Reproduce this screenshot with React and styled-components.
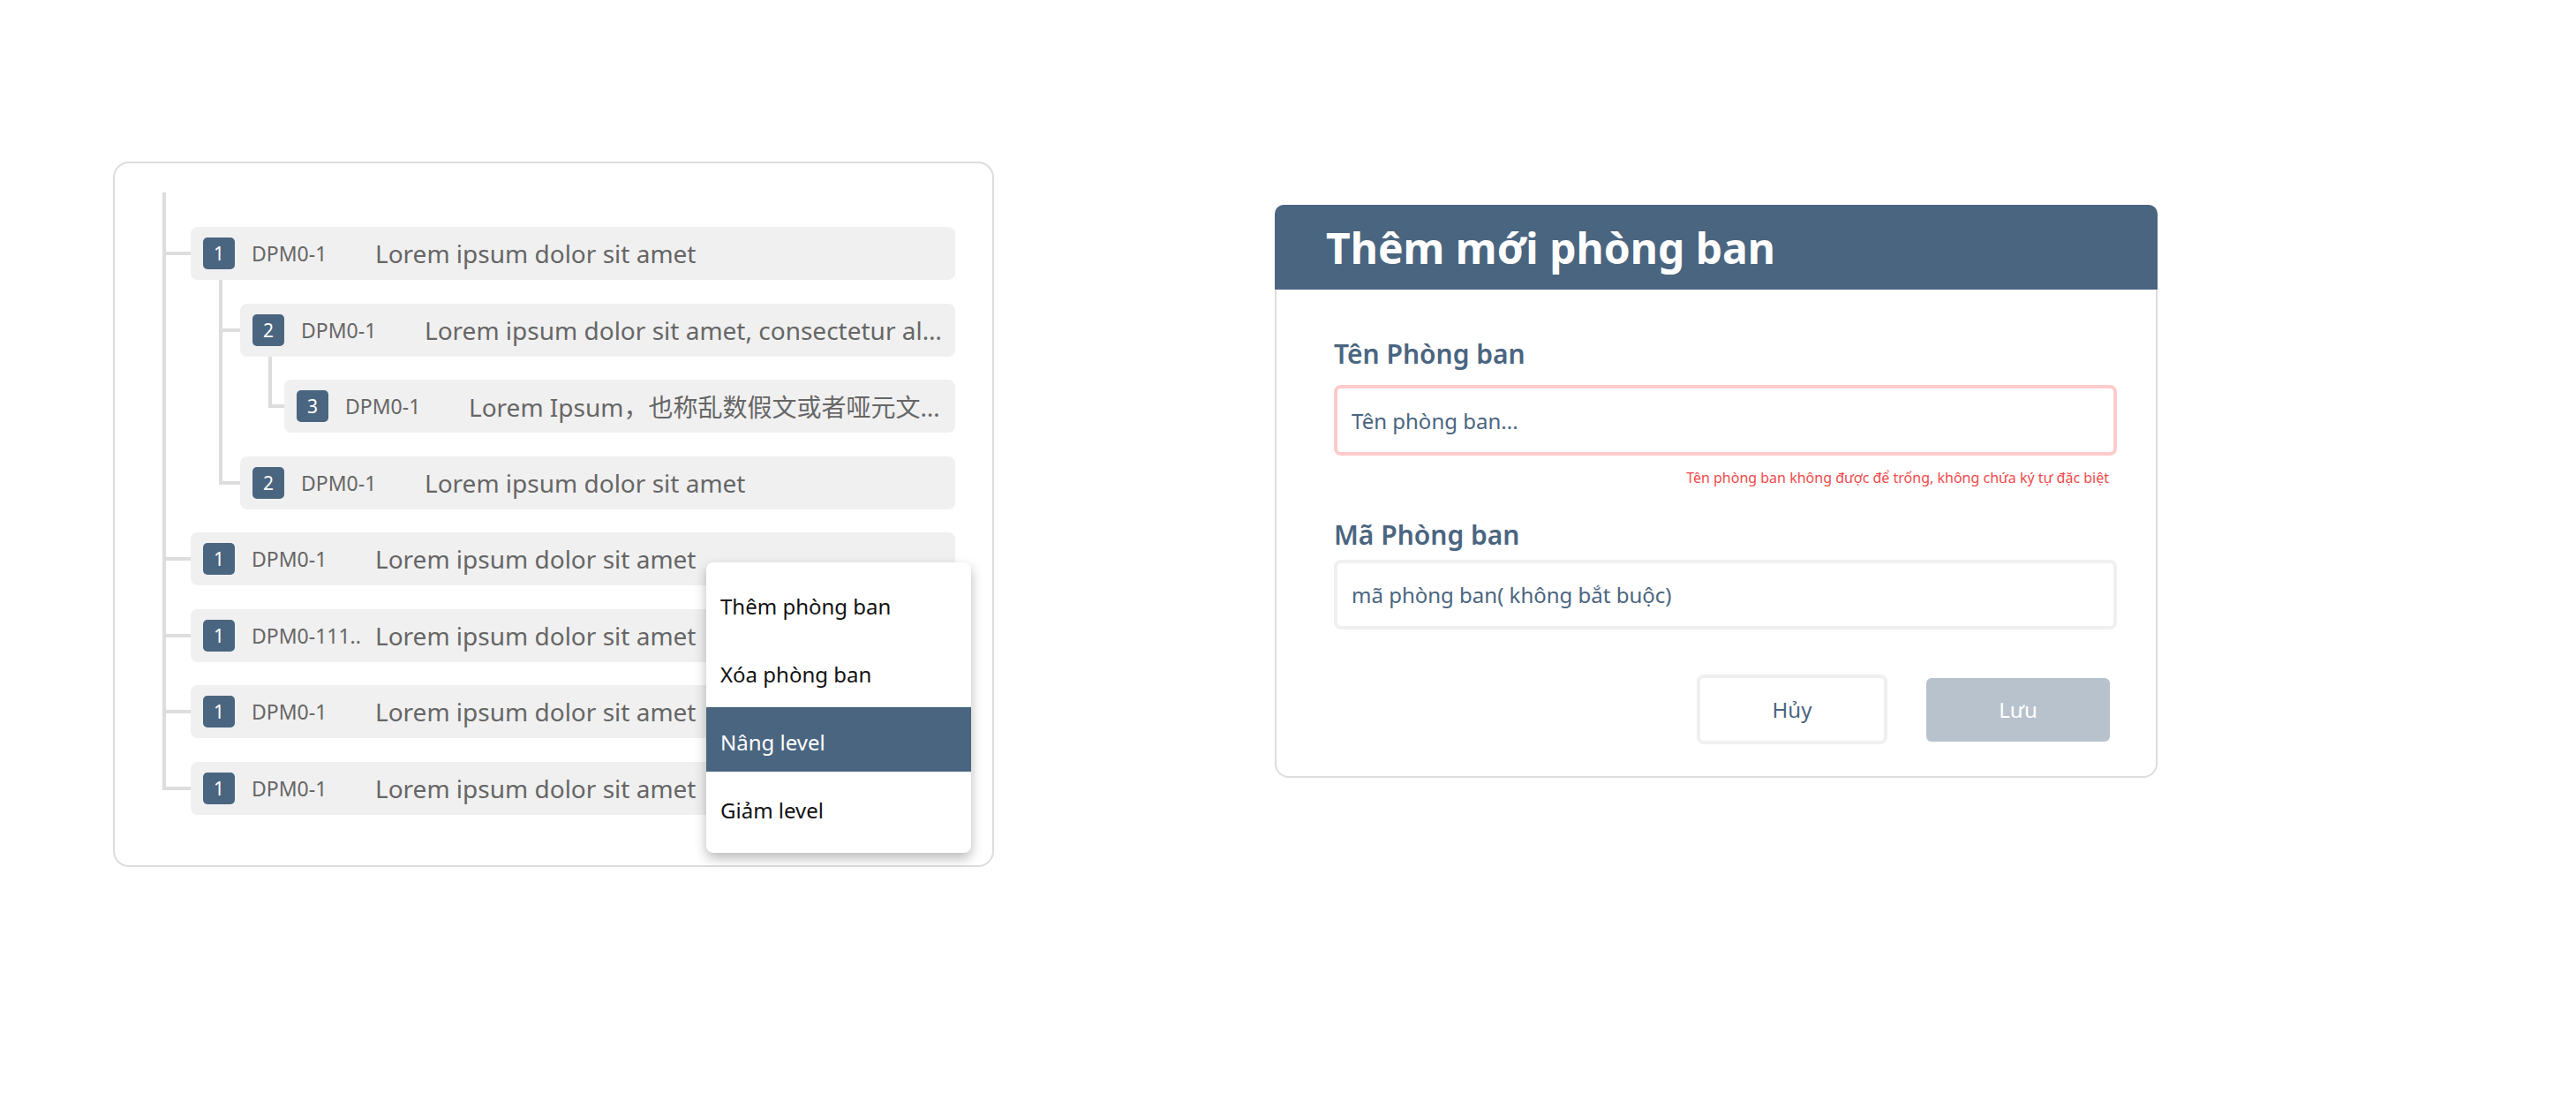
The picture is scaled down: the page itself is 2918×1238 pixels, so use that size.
import React from 'react';
import styled, { createGlobalStyle } from 'styled-components';

const PRIMARY = '#4a6580';

const GlobalStyle = createGlobalStyle`
  html, body {
    margin: 0;
    padding: 0;
    background: #fff;
  }
  body {
    font-family: "Noto Sans", "Noto Sans CJK SC", sans-serif;
  }
  * {
    box-sizing: border-box;
  }
`;

const Page = styled.div`
  display: flex;
  align-items: flex-start;
  gap: 318px;
  padding: 183px 0 0 128px;
  min-height: 1238px;
`;

// ---------- tree panel ----------
const Panel = styled.div`
  position: relative;
  width: 998px;
  border: 2px solid #ddd;
  border-radius: 18px;
  padding: 33px 42px 57px 54px;
`;

const List = styled.ul`
  position: relative;
  list-style: none;
  margin: 0;
  padding: ${(p) => p.$top}px 0 0 ${(p) => p.$indent}px;

  &::before {
    content: '';
    position: absolute;
    left: ${(p) => p.$line}px;
    top: 0;
    bottom: 28px;
    width: 4px;
    background: #ddd;
  }
`;

const Item = styled.li`
  padding-top: 26.5px;
`;

const Row = styled.div`
  position: relative;
  display: flex;
  align-items: center;
  height: 60px;
  padding: 0 10px 0 14px;
  background: #f0f0f0;
  border-radius: 8px;

  &::before {
    content: '';
    position: absolute;
    left: -${(p) => p.$stub}px;
    width: ${(p) => p.$stub}px;
    top: 28px;
    height: 4px;
    background: #ddd;
  }
`;

const Badge = styled.span`
  flex-shrink: 0;
  display: flex;
  align-items: center;
  justify-content: center;
  width: 36px;
  height: 36px;
  border-radius: 5px;
  background: ${PRIMARY};
  color: #fff;
  font-size: 21px;
`;

const Code = styled.span`
  flex-shrink: 0;
  width: 140px;
  margin-left: 19px;
  color: #666;
  font-size: 23px;
  white-space: nowrap;
  overflow: hidden;
`;

const Name = styled.span`
  flex: 1;
  min-width: 0;
  color: #666;
  font-size: 28px;
  white-space: nowrap;
  overflow: hidden;
  text-overflow: ellipsis;
`;

const Menu = styled.div`
  position: absolute;
  left: 670px;
  top: 452px;
  z-index: 5;
  width: 300px;
  padding: 10px 0 15px;
  background: #fff;
  border-radius: 8px;
  box-shadow: 0 6px 14px rgba(0, 0, 0, 0.28);
  display: flex;
  flex-direction: column;
  gap: 4px;
`;

const MenuItem = styled.div`
  display: flex;
  align-items: center;
  height: 73px;
  padding: 6px 16px 0;
  font-size: 24px;
  color: ${(p) => (p.$active ? '#fff' : '#111')};
  background: ${(p) => (p.$active ? PRIMARY : 'transparent')};
`;

// ---------- dialog ----------
const Dialog = styled.div`
  width: 1000px;
  margin-top: 49px;
`;

const Header = styled.div`
  display: flex;
  align-items: center;
  height: 96px;
  padding-left: 58px;
  background: ${PRIMARY};
  border-radius: 10px 10px 0 0;
`;

const Title = styled.h1`
  margin: 0;
  color: #fff;
  font-size: 48px;
  font-weight: 700;
`;

const Body = styled.div`
  border: 2px solid #ddd;
  border-top: none;
  border-radius: 0 0 16px 16px;
  padding: 52px 44px 36px 65px;
`;

const Label = styled.div`
  margin-top: ${(p) => p.$mt || 0}px;
  color: ${PRIMARY};
  font-size: 30px;
  font-weight: 600;
  line-height: 41px;
`;

const Input = styled.input`
  display: block;
  width: 100%;
  height: ${(p) => p.$h}px;
  margin-top: ${(p) => p.$mt}px;
  padding: 0 16px;
  border: 4px solid ${(p) => (p.$error ? '#ffcaca' : '#f0f0f0')};
  border-radius: 8px;
  outline: none;
  background: #fff;
  font-family: "Noto Sans", sans-serif;
  font-size: 24px;
  color: ${PRIMARY};

  &::placeholder {
    color: ${PRIMARY};
    opacity: 1;
  }
`;

const ErrorText = styled.div`
  margin-top: 14px;
  padding-right: 9px;
  text-align: right;
  color: #f04a4a;
  font-size: 16px;
  line-height: 22px;
`;

const Actions = styled.div`
  display: flex;
  justify-content: flex-end;
  align-items: center;
  gap: 44px;
  margin-top: 51px;
  padding-right: 8px;
`;

const Button = styled.button`
  display: flex;
  align-items: center;
  justify-content: center;
  font-family: "Noto Sans", sans-serif;
  font-size: 24px;
  cursor: pointer;
  width: ${(p) => (p.$primary ? 208 : 216)}px;
  height: ${(p) => (p.$primary ? 72 : 79)}px;
  border-radius: ${(p) => (p.$primary ? 6 : 8)}px;
  border: ${(p) => (p.$primary ? 'none' : '4px solid #f0f0f0')};
  background: ${(p) => (p.$primary ? '#b8c2cc' : '#fff')};
  color: ${(p) => (p.$primary ? '#fff' : PRIMARY)};
`;

const tree = [
  {
    level: 1,
    code: 'DPM0-1',
    name: 'Lorem ipsum dolor sit amet',
    children: [
      {
        level: 2,
        code: 'DPM0-1',
        name: 'Lorem ipsum dolor sit amet, consectetur alit, sed do eiusmod tempor incididunt',
        children: [
          {
            level: 3,
            code: 'DPM0-1',
            name: 'Lorem Ipsum，也称乱数假文或者哑元文本，是印刷及排版领域所常用的虚拟文字。',
          },
        ],
      },
      { level: 2, code: 'DPM0-1', name: 'Lorem ipsum dolor sit amet' },
    ],
  },
  { level: 1, code: 'DPM0-1', name: 'Lorem ipsum dolor sit amet' },
  { level: 1, code: 'DPM0-111..', name: 'Lorem ipsum dolor sit amet' },
  { level: 1, code: 'DPM0-1', name: 'Lorem ipsum dolor sit amet' },
  { level: 1, code: 'DPM0-1', name: 'Lorem ipsum dolor sit amet' },
];

// indent of the rows and x of the connector line, per level
const levels = {
  1: { indent: 32, line: 0, top: 12.5 },
  2: { indent: 56, line: 32, top: 0 },
  3: { indent: 50, line: 32, top: 0 },
};

const TreeList = ({ nodes, level }) => {
  const { indent, line, top } = levels[level];
  return (
    <List $indent={indent} $line={line} $top={top}>
      {nodes.map((node, i) => (
        <Item key={i}>
          <Row $stub={indent - line}>
            <Badge>{node.level}</Badge>
            <Code>{node.code}</Code>
            <Name>{node.name}</Name>
          </Row>
          {node.children && <TreeList nodes={node.children} level={level + 1} />}
        </Item>
      ))}
    </List>
  );
};

const menuItems = ['Thêm phòng ban', 'Xóa phòng ban', 'Nâng level', 'Giảm level'];

export default function App() {
  return (
    <>
      <GlobalStyle />
      <Page>
        <Panel>
          <TreeList nodes={tree} level={1} />
          <Menu>
            {menuItems.map((label) => (
              <MenuItem key={label} $active={label === 'Nâng level'}>
                {label}
              </MenuItem>
            ))}
          </Menu>
        </Panel>

        <Dialog>
          <Header>
            <Title>Thêm mới phòng ban</Title>
          </Header>
          <Body>
            <Label>Tên Phòng ban</Label>
            <Input $error $h={80} $mt={15} placeholder="Tên phòng ban..." readOnly />
            <ErrorText>Tên phòng ban không được để trống, không chứa ký tự đặc biệt</ErrorText>
            <Label $mt={33}>Mã Phòng ban</Label>
            <Input $h={79} $mt={8} placeholder="mã phòng ban( không bắt buộc)" readOnly />
            <Actions>
              <Button>Hủy</Button>
              <Button $primary>Lưu</Button>
            </Actions>
          </Body>
        </Dialog>
      </Page>
    </>
  );
}
